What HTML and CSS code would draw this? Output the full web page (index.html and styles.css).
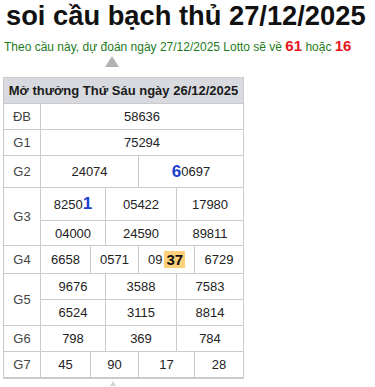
FILE: index.html
```html
<!DOCTYPE html>
<html lang="vi">
<head>
    <meta charset="UTF-8">
    <meta name="viewport" content="width=device-width, initial-scale=1.0">
    <title>soi cầu bạch thủ 27/12/2025</title>
    <link rel="stylesheet" href="styles.css">
</head>
<body>
    <h1 class="title">soi cầu bạch thủ 27/12/2025</h1>
    <p class="predict">Theo cầu này, dự đoán ngày 27/12/2025 Lotto sẽ về <b class="hot">61</b> hoặc <b class="hot">16</b></p>

    <div class="arrow">
        <svg width="14" height="11" viewBox="0 0 14 11"><polygon points="7,0 14,11 0,11" fill="#b4b4b4"/></svg>
    </div>

    <div class="kq">
        <div class="kq-head">Mở thưởng Thứ Sáu ngày 26/12/2025</div>

        <div class="lbl">ĐB</div>
        <div class="num c-full">58636</div>

        <div class="lbl">G1</div>
        <div class="num c-full">75294</div>

        <div class="lbl">G2</div>
        <div class="num c-h1">24074</div>
        <div class="num c-h2"><b class="pos">6</b>0697</div>

        <div class="lbl span2">G3</div>
        <div class="num c-t1">8250<b class="pos">1</b></div>
        <div class="num c-t2">05422</div>
        <div class="num c-t3">17980</div>
        <div class="num c-t1">04000</div>
        <div class="num c-t2">24590</div>
        <div class="num c-t3">89811</div>

        <div class="lbl">G4</div>
        <div class="num c-q1">6658</div>
        <div class="num c-q2">0571</div>
        <div class="num c-q3">09<b class="mark">37</b></div>
        <div class="num c-q4">6729</div>

        <div class="lbl span2">G5</div>
        <div class="num c-t1">9676</div>
        <div class="num c-t2">3588</div>
        <div class="num c-t3">7583</div>
        <div class="num c-t1">6524</div>
        <div class="num c-t2">3115</div>
        <div class="num c-t3">8814</div>

        <div class="lbl">G6</div>
        <div class="num c-t1">798</div>
        <div class="num c-t2">369</div>
        <div class="num c-t3">784</div>

        <div class="lbl">G7</div>
        <div class="num c-q1">45</div>
        <div class="num c-q2">90</div>
        <div class="num c-q3">17</div>
        <div class="num c-q4">28</div>
    </div>

    <div class="arrow arrow-sm">
        <svg width="6" height="5" viewBox="0 0 6 5"><polygon points="3,0 6,5 0,5" fill="#d4d4d4"/></svg>
    </div>
</body>
</html>
```

FILE: styles.css
```css
body {
    font-family: "Liberation Sans", Arial, sans-serif;
    margin: 0;
    padding: 0 3px;
    background: #fff;
    color: #222;
}
.title {
    margin: 0 0 0 3px;
    font-size: 27.3px;
    line-height: 32px;
    font-weight: bold;
    white-space: nowrap;
    color: #111;
}
.predict {
    margin: 5px 0 0 1px;
    font-size: 12px;
    line-height: 18px;
    white-space: nowrap;
    color: #1e7b1e;
}
.hot {
    color: #e8141b;
    font-size: 15px;
}
.arrow {
    display: flex;
    margin: 0 0 0 102px;
    height: 11px;
}
.arrow-sm {
    margin: 2px 0 0 107px;
    height: 5px;
}
.kq {
    display: grid;
    width: 239px;
    grid-template-columns: 36px 49px 14px 32px 37px 17px 48px;
    grid-template-rows: 25px 25px 25px 31px 32px 24px 27px 25px 25px 25px 25px;
    gap: 1px;
    padding: 1px 1px 2px 1px;
    margin-top: 10px;
    background: #cbcbcb;
    font-size: 13px;
}
.kq > div {
    background: #fff;
    display: flex;
    align-items: center;
    justify-content: center;
}
.kq .kq-head {
    grid-column: 1 / 8;
    background: #d9dae0;
    font-weight: bold;
    color: #1a1a1a;
}
.lbl {
    grid-column: 1;
    color: #444;
}
.span2 {
    grid-row: span 2;
}
.c-full { grid-column: 2 / 8; }
.c-h1 { grid-column: 2 / 5; }
.c-h2 { grid-column: 5 / 8; }
.c-t1 { grid-column: 2 / 4; }
.c-t2 { grid-column: 4 / 6; }
.c-t3 { grid-column: 6 / 8; }
.c-q1 { grid-column: 2 / 3; }
.c-q2 { grid-column: 3 / 5; }
.c-q3 { grid-column: 5 / 7; }
.c-q4 { grid-column: 7 / 8; }
.pos {
    color: #1c3fd0;
    font-size: 17px;
}
.mark {
    background: #ffd07a;
    font-size: 15px;
    padding: 1px 2px;
    margin-left: 2px;
    line-height: 15px;
    color: #111;
}
```
